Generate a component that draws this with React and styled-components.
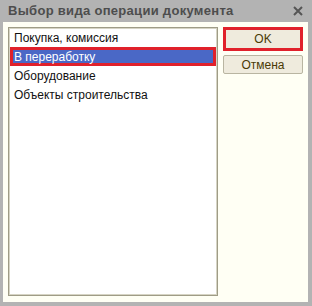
import React from 'react';
import styled, { createGlobalStyle } from 'styled-components';

const GlobalStyle = createGlobalStyle`
  html, body {
    margin: 0;
    padding: 0;
    background: #b3b3b3;
  }
`;

const Window = styled.div`
  width: 312px;
  height: 306px;
  box-sizing: border-box;
  padding: 0 4px 4px 3px;
  display: flex;
  flex-direction: column;
  background: #b3b3b3;
  font-family: "Liberation Sans", Arial, sans-serif;
`;

const TitleBar = styled.div`
  height: 22px;
  flex: none;
  display: flex;
  align-items: center;
  justify-content: space-between;
  padding: 0 5px 1px 5px;
  box-sizing: border-box;
`;

const Title = styled.span`
  font-size: 13px;
  font-weight: bold;
  color: #4d4d4d;
  letter-spacing: 0.3px;
`;

const Body = styled.div`
  flex: 1;
  display: flex;
  gap: 5px;
  padding: 5px 5px 6px 5px;
  background: #fffff4;
`;

const List = styled.div`
  width: 210px;
  box-sizing: border-box;
  border: 1px solid #9f9c86;
  box-shadow: inset 0 0 0 1px #d6d4c4;
  background: #ffffff;
  padding: 0 1px;
  display: flex;
  flex-direction: column;
`;

const Row = styled.div`
  height: 19px;
  box-sizing: border-box;
  display: flex;
  align-items: center;
  padding-left: ${({ selected }) => (selected ? '1px' : '4px')};
  font-size: 12px;
  color: ${({ selected }) => (selected ? '#ffffff' : '#111111')};
  background: ${({ selected }) => (selected ? '#4a68c6' : 'transparent')};
  border: ${({ selected }) => (selected ? '3px solid #e0212b' : 'none')};
`;

const Buttons = styled.div`
  flex: 1;
  display: flex;
  flex-direction: column;
  gap: 4px;
`;

const Button = styled.div`
  height: ${({ marked }) => (marked ? '24px' : '19px')};
  box-sizing: border-box;
  display: flex;
  align-items: center;
  justify-content: center;
  font-size: 12px;
  color: #4a3a06;
  background: #efebdd;
  border: ${({ marked }) => (marked ? '3px solid #e0212b' : '1px solid #b9b5a1')};
  border-radius: ${({ marked }) => (marked ? '0' : '2px')};
`;

const items = [
  'Покупка, комиссия',
  'В переработку',
  'Оборудование',
  'Объекты строительства',
];

const App = () => (
  <>
    <GlobalStyle />
    <Window>
      <TitleBar>
        <Title>Выбор вида операции документа</Title>
        <svg width="10" height="10" viewBox="0 0 10 10">
          <path d="M1 1 L9 9 M9 1 L1 9" stroke="#555" strokeWidth="2" />
        </svg>
      </TitleBar>
      <Body>
        <List>
          {items.map((item, i) => (
            <Row key={item} selected={i === 1}>{item}</Row>
          ))}
        </List>
        <Buttons>
          <Button marked>OK</Button>
          <Button>Отмена</Button>
        </Buttons>
      </Body>
    </Window>
  </>
);

export default App;
